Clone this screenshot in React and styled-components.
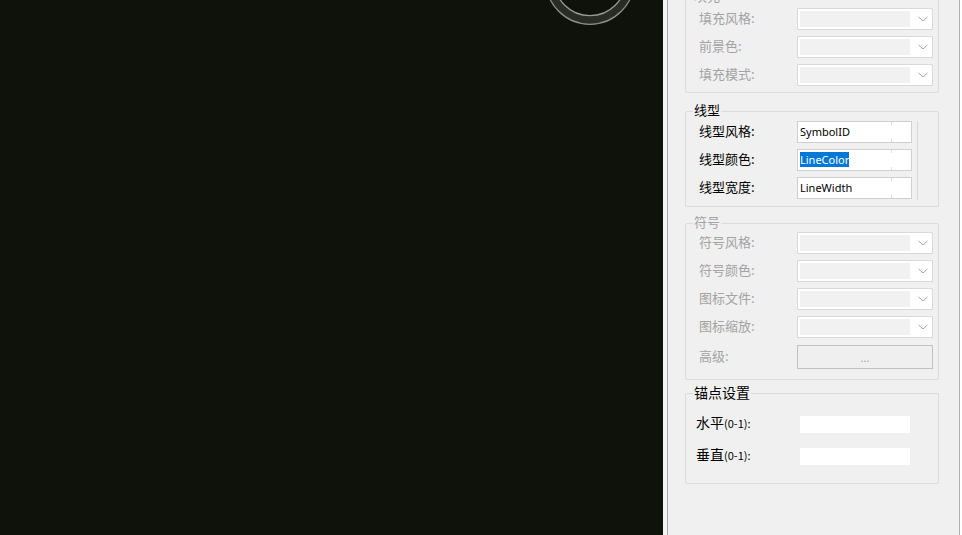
import React from 'react';
import styled, { createGlobalStyle } from 'styled-components';

const Global = createGlobalStyle`
  html, body { margin: 0; padding: 0; background: #0f120a; overflow: hidden; }
  #root { width: 962px; height: 535px; }
  * { box-sizing: border-box; }
`;

const Window = styled.div`
  display: flex;
  width: 962px;
  height: 535px;
  font-family: "Noto Sans CJK SC", "Noto Sans", sans-serif;
`;

const Canvas = styled.div`
  position: relative;
  flex: 0 0 663px;
  background: #0f120a;
  overflow: hidden;
`;

const Compass = styled.svg`
  position: absolute;
  left: 540px;
  top: -70px;
`;

const Panel = styled.aside`
  flex: 0 0 299px;
  display: flex;
  border-left: 4px solid #f4f4f4;
  border-right: 2px solid #ffffff;
  background: #f0f0f0;
`;

const PanelInner = styled.div`
  flex: 1;
  border-left: 1px solid #a8a8a8;
  border-right: 1px solid #b0b0b0;
  background: #f0f0f0;
  padding: 0 20px 0 17px;
  overflow: hidden;
`;

const Group = styled.fieldset`
  margin: ${p => p.$top}px 0 0;
  padding: 0;
  min-width: 0;
  border: 1px solid #dcdcdc;
  border-radius: 2px;
`;

const Legend = styled.legend`
  margin-left: 7px;
  padding: 0 1px 2px;
  font-size: ${p => p.$size || 13}px;
  line-height: 14px;
  color: ${p => (p.$disabled ? '#a3a3a3' : '#000')};
`;

const Rows = styled.div`
  display: grid;
  grid-template-columns: ${p => p.$cols};
  grid-template-rows: ${p => p.$rows};
  row-gap: ${p => p.$gap ?? 4}px;
  align-items: center;
  padding: ${p => p.$pad};
`;

const Label = styled.div`
  grid-column: 1;
  font-size: ${p => p.$size || 13}px;
  line-height: 17px;
  padding-bottom: 3px;
  color: ${p => (p.$disabled ? '#a3a3a3' : '#000')};
  white-space: nowrap;
`;

const Small = styled.span`
  font-size: 11px;
`;

const Combo = styled.div`
  grid-column: 2;
  height: 22px;
  width: 136px;
  border: 1px solid #d9d9d9;
  background: #ffffff;
  padding: 2px;
  display: flex;
`;

const ComboField = styled.div`
  flex: 0 0 110px;
  background: #f1f1f1;
`;

const ComboArrow = styled.div`
  flex: 1;
  display: flex;
  align-items: center;
  justify-content: center;
  padding-left: 5px;
`;

const TextBox = styled.div`
  grid-column: 2;
  position: relative;
  height: 22px;
  width: 115px;
  border: 1px solid #cfcfcf;
  background: #fff;
  padding-left: 2px;
  font-family: "Noto Sans", sans-serif;
  font-size: 11px;
  line-height: 20px;
  color: #000;
  &::after {
    content: "";
    position: absolute;
    right: 19px;
    top: 0;
    bottom: 0;
    width: 1px;
    background: linear-gradient(#dedede 0 3px, transparent 3px calc(100% - 3px), #dedede calc(100% - 3px));
  }
`;

const Selected = styled.span`
  background: #0078d7;
  color: #fff;
`;

const Divider = styled.div`
  grid-column: 4;
  grid-row: 1 / span 3;
  align-self: stretch;
  margin-top: 1px;
  background: #d9d9d9;
`;

const Button = styled.div`
  grid-column: 2;
  width: 136px;
  height: 24px;
  border: 1px solid #c2c2c2;
  background: #efefef;
  color: #a0a0a0;
  font-family: "Noto Sans", sans-serif;
  font-size: 11px;
  line-height: 24px;
  text-align: center;
`;

const Plain = styled.div`
  grid-column: 2;
  width: 110px;
  height: 17px;
  background: #ffffff;
`;

const Chevron = () => (
  <svg width="10" height="6" viewBox="0 0 10 6">
    <path d="M0.5 0.8 L5 5 L9.5 0.8" fill="none" stroke="#a5a5a5" strokeWidth="1" />
  </svg>
);

const DisabledCombo = () => (
  <Combo>
    <ComboField />
    <ComboArrow>
      <Chevron />
    </ComboArrow>
  </Combo>
);

const fillRows = ['填充风格:', '前景色:', '填充模式:'];
const symbolRows = ['符号风格:', '符号颜色:', '图标文件:', '图标缩放:'];

export default function App() {
  return (
    <>
      <Global />
      <Window>
        <Canvas>
          <Compass width="100" height="100" viewBox="0 0 100 100">
            <circle cx="50" cy="50" r="40" fill="none" stroke="#2a2b25" strokeWidth="8.5" />
            <circle cx="50" cy="50" r="44.3" fill="none" stroke="#8e8e88" strokeWidth="1.3" />
            <circle cx="50" cy="50" r="35.7" fill="none" stroke="#9a9a93" strokeWidth="1.3" />
          </Compass>
        </Canvas>
        <Panel>
          <PanelInner>
            <Group $top={-11}>
              <Legend $disabled>填充</Legend>
              <Rows $cols="98px 136px" $rows="repeat(3, 24px)" $pad="2px 5px 5px 13px">
                {fillRows.map(t => (
                  <React.Fragment key={t}>
                    <Label $disabled>{t}</Label>
                    <DisabledCombo />
                  </React.Fragment>
                ))}
              </Rows>
            </Group>

            <Group $top={10}>
              <Legend>线型</Legend>
              <Rows $cols="98px 115px 5px 1px" $rows="repeat(3, 24px)" $pad="1px 0 6px 13px">
                <Label>线型风格:</Label>
                <TextBox>SymbolID</TextBox>
                <Label>线型颜色:</Label>
                <TextBox><Selected>LineColor</Selected></TextBox>
                <Label>线型宽度:</Label>
                <TextBox>LineWidth</TextBox>
                <Divider />
              </Rows>
            </Group>

            <Group $top={8}>
              <Legend $disabled>符号</Legend>
              <Rows $cols="98px 136px" $rows="repeat(4, 24px) 27px" $pad="0 5px 9px 13px">
                {symbolRows.map(t => (
                  <React.Fragment key={t}>
                    <Label $disabled>{t}</Label>
                    <DisabledCombo />
                  </React.Fragment>
                ))}
                <Label $disabled>高级:</Label>
                <Button>...</Button>
              </Rows>
            </Group>

            <Group $top={5}>
              <Legend $size={14}>锚点设置</Legend>
              <Rows $cols="104px 110px" $rows="repeat(2, 24px)" $gap={8} $pad="11px 0 15px 10px">
                <Label $size={14}>水平<Small>(0-1):</Small></Label>
                <Plain />
                <Label $size={14}>垂直<Small>(0-1):</Small></Label>
                <Plain />
              </Rows>
            </Group>
          </PanelInner>
        </Panel>
      </Window>
    </>
  );
}
